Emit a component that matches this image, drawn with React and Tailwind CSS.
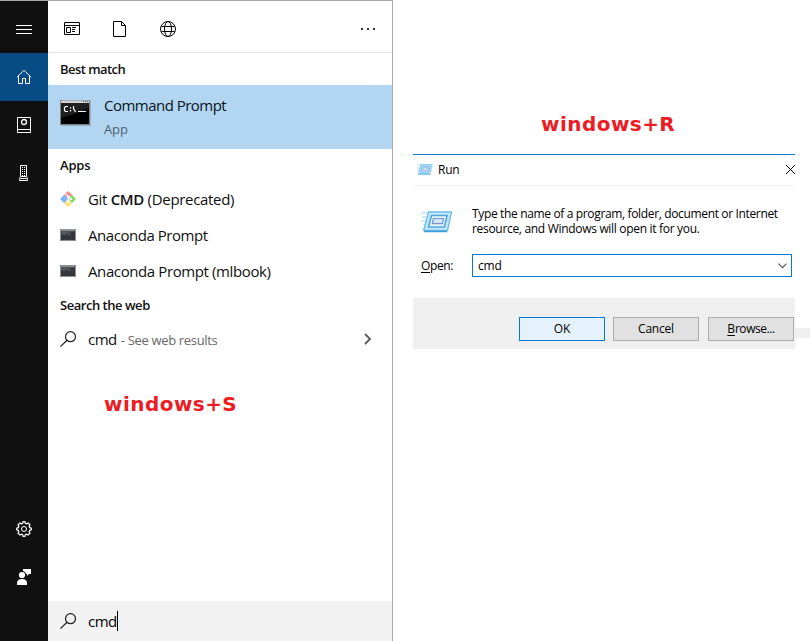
import React from "react";

const RED = "font-['DejaVu_Sans'] text-[20px] font-bold leading-6 tracking-[0.45px] text-[#ed1c24] whitespace-nowrap";

function SideCell({ active = false, className = "", children }) {
  return (
    <div className={`flex h-12 w-12 shrink-0 items-center justify-center ${active ? "bg-[#084c86]" : ""} ${className}`}>
      {children}
    </div>
  );
}

function Icon({ w = 16, h = 16, className = "", children }) {
  return (
    <svg width={w} height={h} viewBox={`0 0 ${w} ${h}`} fill="none" stroke="currentColor" className={`shrink-0 ${className}`}>
      {children}
    </svg>
  );
}

function Sidebar() {
  return (
    <nav className="flex w-12 shrink-0 flex-col bg-[#101010] text-white">
      <SideCell className="mb-1 pt-[9px]">
        <Icon h={9}><path d="M0 .5h16M0 4.5h16M0 8.5h16" /></Icon>
      </SideCell>
      <SideCell active>
        <Icon><path d="M1 8.2 8 1.2l7 7M2.500 7v7.500h4V9.500h3v5h4V7" /></Icon>
      </SideCell>
      <SideCell>
        <Icon w={14}>
          <path d="M.5.5h13v15H.5zM.5 12.500h13" />
          <circle cx="7" cy="5" r="2.500" strokeWidth="1.300" />
        </Icon>
      </SideCell>
      <SideCell className="pr-px">
        <Icon w={9}>
          <path d="M1.500.5h6v11h-6zM1 12 .5 15.500h8L8 12M1.500 13.500h6" />
          <path d="M3 2.500h4M3 4.500h4M3 6.500h4M3 8.500h4M3 10.500h4" strokeDasharray="1 1" />
        </Icon>
      </SideCell>
      <div className="flex-1" />
      <SideCell>
        <Icon>
          <path strokeWidth="1.2" d="M6.700 2.200 7.100.7h1.800l.4 1.500 1.400.6 1.400-.8 1.900 1.900-.8 1.400.6 1.400 1.500.4v1.800l-1.500.4-.6 1.400.8 1.400-1.900 1.900-1.400-.8-1.400.6-.4 1.500H7.100l-.4-1.500-1.400-.6-1.400.8L2 12.100l.8-1.400-.6-1.400L.7 8.900V7.100l1.500-.4.6-1.400L2 3.900 3.900 2l1.400.8z" />
          <circle cx="8" cy="8" r="2.500" />
        </Icon>
      </SideCell>
      <SideCell className="mb-10">
        <Icon w={14}>
          <g fill="currentColor" stroke="none">
            <circle cx="5" cy="6" r="3.100" />
            <path d="M0 16v-2c0-2.500 1.900-4 5-4s5 1.500 5 4v2z" />
            <path d="M6 0h8v5h-2l-2 2V5H9C8.800 3.500 7.500 2.300 6 2z" />
          </g>
        </Icon>
      </SideCell>
    </nav>
  );
}

function SearchIcon() {
  return (
    <Icon w={17} className="text-[#202020]">
      <circle cx="10.500" cy="5.700" r="5" strokeWidth="1.200" />
      <path strokeWidth="1.200" d="m7 9.300-6.600 6.300" />
    </Icon>
  );
}

function SmallConsole() {
  return (
    <svg width="16" height="12" viewBox="0 0 16 12" className="shrink-0">
      <path d="M0 0h16v12H0z" fill="#8c8e91" />
      <path d="M1 2h14v9H1z" fill="#34383c" />
      <path d="M1 2h14L5 6H1z" fill="#4c5054" />
      <path d="M3 3.500h2M6 3.500l1 1.500M8 5.500h3" stroke="#6c6f72" strokeWidth=".7" />
    </svg>
  );
}

function GitIcon() {
  return (
    <svg width="16" height="16" viewBox="0 0 16 16" className="shrink-0">
      <path d="m8 0 4 4-4 4-4-4z" fill="#ff8080" />
      <path d="m12 4 4 4-4 4-4-4z" fill="#80d95b" />
      <path d="m8 8 4 4-4 4-4-4z" fill="#ffdc73" />
      <path d="m4 4 4 4-4 4-4-4z" fill="#80b3ff" />
      <path d="m5.500 2.500 3 3v6M8.500 5.500 11 8" stroke="#fff" strokeWidth="1.200" fill="none" />
      <circle cx="8.300" cy="5.600" r="1.300" fill="#fff" />
      <circle cx="8.300" cy="11" r="1.400" fill="#fff" />
      <circle cx="11" cy="8" r="1.300" fill="#fff" />
    </svg>
  );
}

function Heading({ className = "", children }) {
  return (
    <h2 className={`flex h-8 shrink-0 items-center whitespace-nowrap pl-3 pt-0.5 text-[13px] font-semibold text-[#101010] ${className}`}>
      {children}
    </h2>
  );
}

function AppRow({ icon, children }) {
  return (
    <div className="flex h-9 shrink-0 items-center gap-3 whitespace-nowrap pb-0.5 pl-3 text-[15px] tracking-[-0.39px] text-[#101010]">
      {icon}
      <span>{children}</span>
    </div>
  );
}

function SearchPanel() {
  return (
    <section className="flex w-[393px] shrink-0 border-r border-t border-[#a9a9a9]">
      <Sidebar />
      <main className="flex min-w-0 flex-1 flex-col">
        <header className="flex h-[52px] shrink-0 items-center border-b border-[#e5e5e5] pl-4 pr-4 pt-[4px] text-black">
          <Icon h={13}>
            <path d="M.5.5h15v12H.5zM0 3.500h16M2.500 5.500h4v5h-4zM8 5.500h4M8 7.500h3M8 9.500h3" />
          </Icon>
          <Icon w={13} className="ml-[33px]"><path d="M.5.5h8l4 4v11H.5zM8.500.5v4h4" /></Icon>
          <Icon className="ml-[34px]">
            <circle cx="8" cy="8" r="7.500" />
            <ellipse cx="8" cy="8" rx="3.500" ry="7.500" />
            <path d="M1.500 5.500h13M1.500 10.500h13" />
          </Icon>
          <div className="ml-auto flex gap-1 pr-px"><i className="size-0.5 bg-[#333]" /><i className="size-0.5 bg-[#333]" /><i className="size-0.5 bg-[#333]" /></div>
        </header>
        <Heading className="tracking-[-0.55px]">Best match</Heading>
        <div className="flex h-16 shrink-0 bg-[#b2d6f2] pl-3 pt-[15px]">
          <svg width="31" height="27" viewBox="0 0 31 27" className="shrink-0">
            <path d="M1 1h30v25H1z" fill="#789" opacity=".5" />
            <path d="M0 0h30v25H0z" fill="#808080" />
            <path d="M1 .5h28V3H1z" fill="#d0d3d6" />
            <path d="M1 3h28v21H1z" fill="#000" />
            <path d="M1 3h28v5L14 14 1 18z" fill="#303030" opacity=".65" />
            <path d="M23 1.500h1M25 1.500h1M27 1.500h1" stroke="#555" />
            <path d="M8 6.500H5.500L4.500 7.500v3l1 1H8M10.500 7v1.500M10.500 10v1.500M13.500 6v2.500l2 3.500M18 11.500h8" stroke="#fff" strokeWidth="1.200" fill="none" />
          </svg>
          <div className="ml-[13px] whitespace-nowrap">
            <div className="-mt-[5px] text-[15px] leading-5 tracking-[-0.52px] text-[#0b1420]">Command Prompt</div>
            <div className="mt-[5px] text-[13px] leading-[18px] tracking-[-0.1px] text-[#4e6474]">App</div>
          </div>
        </div>
        <Heading className="mb-px tracking-[-0.2px]">Apps</Heading>
        <AppRow icon={<GitIcon />}><span className="tracking-[-0.32px]">Git <b className="font-semibold">CMD</b> (Deprecated)</span></AppRow>
        <AppRow icon={<SmallConsole />}><span className="tracking-[-0.45px]">Anaconda Prompt</span></AppRow>
        <AppRow icon={<SmallConsole />}>Anaconda Prompt (mlbook)</AppRow>
        <Heading className="-mt-px tracking-[-0.47px]">Search the web</Heading>
        <div className="flex h-9 shrink-0 items-center whitespace-nowrap pl-3 text-[15px] tracking-[-0.5px] text-[#101010]">
          <SearchIcon />
          <span className="ml-[11px] pt-px">cmd</span>
          <span className="ml-1 pt-1 text-[13px] tracking-[-0.33px] text-[#686868]">- See web results</span>
          <Icon w={8} h={12} className="ml-auto mr-5 text-[#606060]"><path strokeWidth="2" d="m1 1 5 5-5 5" /></Icon>
        </div>
        <p className={`${RED} ml-14 mt-[35px]`}>windows+S</p>
        <div className="mt-auto flex h-10 items-center bg-[#f2f2f2] pl-3 text-[15px] tracking-[-0.5px]">
          <SearchIcon />
          <span className="ml-[11px]">cmd</span>
          <span className="h-5 w-px bg-black" />
        </div>
      </main>
    </section>
  );
}

function RunIcon({ w, h }) {
  return (
    <svg width={w} height={h} viewBox="0 0 32 22" className="shrink-0">
      <path d="M0 2h8M1 6h6M0 10h6M2 14h4M1 18h3" stroke="#a5d3f0" strokeWidth="1.200" />
      <path d="M7.500 1h23l-4 18.500H2.800z" fill="#c5e9fb" stroke="#6cbcec" strokeWidth="1.400" />
      <path d="M10.500 4.500h15.500l-2.500 11.500H7.500z" fill="#e8f7fe" stroke="#4fa6e0" strokeWidth="1.600" />
      <path d="M12.500 7.500h10l-1 5.200H11.300z" fill="#d3e6fc" stroke="#7391cf" strokeWidth="1.200" />
      <path d="M3 20.500h23" stroke="#3c9ddb" strokeWidth="1.500" />
    </svg>
  );
}

function DialogButton({ primary = false, children }) {
  return (
    <button className={`h-6 w-[86px] border text-[12px] leading-none tracking-[-0.2px] ${primary ? "border-[#0078d7] bg-[#e5f1fb]" : "border-[#adadad] bg-[#e1e1e1]"}`}>
      {children}
    </button>
  );
}

function RunDialog() {
  return (
    <div className="flex">
      <section className="flex h-[195px] w-[382px] shrink-0 flex-col border-t border-[#1979ca] text-[12px] text-black">
        <div className="flex h-[31px] shrink-0 items-center border-b border-[#f0f0f0] pl-1">
          <div className="pb-0.5"><RunIcon w={16} h={11} /></div>
          <span className="ml-[5px] tracking-[-0.2px]">Run</span>
          <Icon w={9} h={9} className="ml-auto mb-0.5"><path d="m0 0 9 9m0-9-9 9" /></Icon>
        </div>
        <div className="flex pl-2 pt-5">
          <div className="pt-[5px]"><RunIcon w={32} h={22} /></div>
          <div className="ml-[19px] whitespace-nowrap leading-[15px]">
            <p className="h-[15px] tracking-[-0.35px]">Type the name of a program, folder, document or Internet</p>
            <p className="h-[15px] tracking-[-0.31px]">resource, and Windows will open it for you.</p>
          </div>
        </div>
        <div className="mt-[18px] flex items-center pl-2">
          <span className="w-[51px] tracking-[-0.35px]"><u className="underline-offset-2">O</u>pen:</span>
          <div className="flex h-[23px] w-80 items-center justify-between border border-[#0078d7] pl-[5px] pr-1">
            <span className="tracking-[-0.2px]">cmd</span>
            <Icon w={9} h={6} className="text-[#555]"><path d="m.5.700 4 4 4-4" strokeWidth="1.200" /></Icon>
          </div>
        </div>
        <footer className="mt-auto flex h-[51px] justify-end bg-[#efefef] pr-px pt-[19px]">
          <DialogButton primary>OK</DialogButton>
          <span className="w-2" />
          <DialogButton>Cancel</DialogButton>
          <span className="w-[9px]" />
          <DialogButton><u className="underline-offset-2">B</u><span className="tracking-[-0.45px]">rowse...</span></DialogButton>
        </footer>
      </section>
      <div className="mt-[174px] h-2.5 flex-1 bg-[#efefef]" />
    </div>
  );
}

export default function App() {
  return (
    <div className="flex h-[641px] w-[810px] overflow-hidden bg-white font-['Open_Sans','Noto_Sans',sans-serif]">
      <SearchPanel />
      <div className="flex-1 pl-5 pt-[112px]">
        <p className={`${RED} mb-[18px] ml-32`}>windows+R</p>
        <RunDialog />
      </div>
    </div>
  );
}
